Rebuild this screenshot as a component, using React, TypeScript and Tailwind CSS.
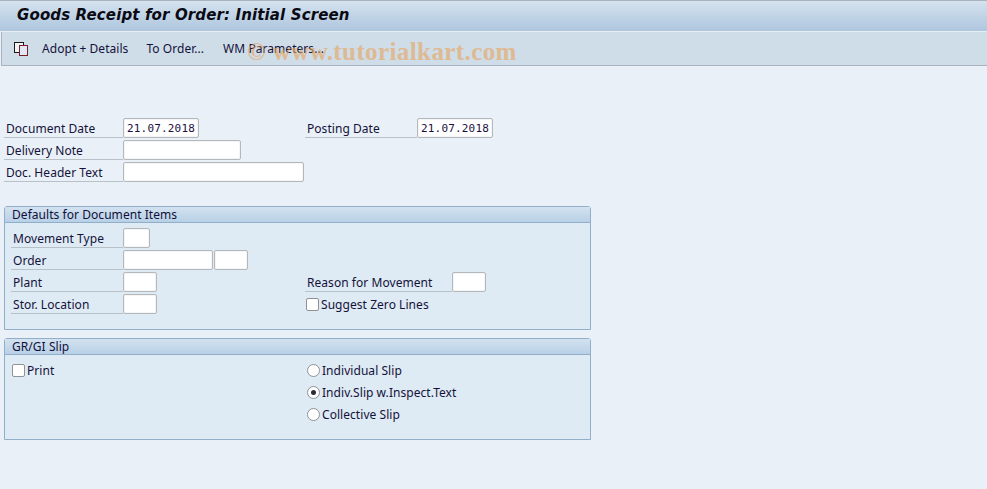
const font = "[font-family:'Noto_Sans',sans-serif] tracking-[0.05px]";

function Field({ w, value }: { w: string; value?: string }) {
  return (
    <div className={`${w} h-5 shrink-0 bg-white border border-[#b4b8bb] rounded-[2px] shadow-[inset_0_0_0_1px_#f4f5f6] pl-[3px] text-[11px] leading-[19px] text-[#1c1040] font-['DejaVu_Sans_Mono',monospace] tracking-[0.18px]`}>
      {value}
    </div>
  );
}

function Label({ w, text }: { w: string; text: string }) {
  return (
    <div className={`${w} h-5 shrink-0 border-b border-[#b9c1c8] pl-[2px] text-[12px] leading-[21px] text-[#14123a] whitespace-nowrap`}>
      {text}
    </div>
  );
}

function Row({ children, className = "" }: { children: React.ReactNode; className?: string }) {
  return <div className={`flex h-[22px] ${className}`}>{children}</div>;
}

function Check({ text }: { text: string }) {
  return (
    <div className="flex items-center h-5 text-[12px] text-[#14123a]">
      <div className="w-[13px] h-[13px] bg-white border border-[#8f9396] rounded-[2px] mr-[2px]" />
      <span className="pt-[2px]">{text}</span>
    </div>
  );
}

function Radio({ text, on }: { text: string; on?: boolean }) {
  return (
    <div className="flex items-center h-[22px] text-[12px] text-[#14123a]">
      <div className="w-[13px] h-[13px] bg-white border border-[#8f9396] rounded-full mr-[2px] flex items-center justify-center">
        {on && <div className="w-[5px] h-[5px] rounded-full bg-[#2b2b3a]" />}
      </div>
      <span className="pt-[2px]">{text}</span>
    </div>
  );
}

function Group({ title, h, children }: { title: string; h: string; children: React.ReactNode }) {
  return (
    <div className={`w-[587px] ${h} ml-1 border border-[#92afc9] rounded-t-[3px] bg-[#deeaf4]`}>
      <div className="h-4 border-b border-[#92afc9] bg-linear-to-b from-[#d3e2f0] to-[#b8d0e6] pl-[7px] text-[12px] leading-[16px] text-[#10103a]">
        {title}
      </div>
      {children}
    </div>
  );
}

export default function App() {
  return (
    <div className={`relative w-[987px] h-[489px] overflow-hidden bg-[#e9f0f7] ${font}`}>
      <div className="h-[32px] border-t border-[#a9b4bf] border-b border-b-[#e6edf3] bg-linear-to-b from-[#d5e2ee] to-[#aec6de] pl-[17px] text-[15px] leading-[29px] font-bold italic text-[#0a0a14] font-['DejaVu_Sans',sans-serif] tracking-[0.13px]">
        Goods Receipt for Order: Initial Screen
      </div>
      <div className="h-[34px] ml-[1px] flex items-center bg-[#cfdde8] border-l border-b border-[#a8b3bd] text-[12px] text-[#14123a]">
        <svg width="15" height="14" viewBox="0 0 15 14" className="ml-[12px] mr-[13px]">
          <rect x="0.5" y="0.5" width="9" height="10" fill="#f3f3f3" stroke="#1a1a1a" />
          <rect x="5.5" y="3.5" width="8" height="10" fill="#dfe8f3" stroke="#7a1f2a" />
        </svg>
        <span className="mr-[18px]">Adopt + Details</span>
        <span className="mr-[19px]">To Order...</span>
        <span>WM Parameters...</span>
      </div>

      <div className="pt-[52px]">
        <Row className="pl-[4px]">
          <Label w="w-[119px]" text="Document Date" />
          <Field w="w-[76px]" value="21.07.2018" />
          <div className="w-[106px]" />
          <Label w="w-[112px]" text="Posting Date" />
          <Field w="w-[76px]" value="21.07.2018" />
        </Row>
        <Row className="pl-[4px]">
          <Label w="w-[119px]" text="Delivery Note" />
          <Field w="w-[118px]" />
        </Row>
        <Row className="pl-[4px]">
          <Label w="w-[119px]" text="Doc. Header Text" />
          <Field w="w-[181px]" />
        </Row>
      </div>

      <div className="mt-[22px]">
        <Group title="Defaults for Document Items" h="h-[124px]">
          <div className="pt-[5px] pl-[6px]">
            <Row>
              <Label w="w-[112px]" text="Movement Type" />
              <Field w="w-[27px]" />
            </Row>
            <Row>
              <Label w="w-[112px]" text="Order" />
              <Field w="w-[90px]" />
              <div className="w-[1px]" />
              <Field w="w-[34px]" />
            </Row>
            <Row>
              <Label w="w-[112px]" text="Plant" />
              <Field w="w-[34px]" />
              <div className="w-[148px]" />
              <Label w="w-[147px]" text="Reason for Movement" />
              <Field w="w-[34px]" />
            </Row>
            <Row>
              <Label w="w-[112px]" text="Stor. Location" />
              <Field w="w-[34px]" />
              <div className="w-[149px]" />
              <Check text="Suggest Zero Lines" />
            </Row>
          </div>
        </Group>
      </div>

      <div className="mt-[8px]">
        <Group title="GR/GI Slip" h="h-[102px]">
          <div className="flex pt-[4px] pl-[7px]">
            <div className="w-[295px] pt-[1px]">
              <Check text="Print" />
            </div>
            <div>
              <Radio text="Individual Slip" />
              <Radio text="Indiv.Slip w.Inspect.Text" on />
              <Radio text="Collective Slip" />
            </div>
          </div>
        </Group>
      </div>

      <div className="absolute left-[247px] top-[35px] text-[25px] leading-[34px] font-bold whitespace-nowrap text-[#e8a45c] opacity-60 font-['Liberation_Serif',serif] tracking-[0.4px]">
        © www.tutorialkart.com
      </div>
    </div>
  );
}
